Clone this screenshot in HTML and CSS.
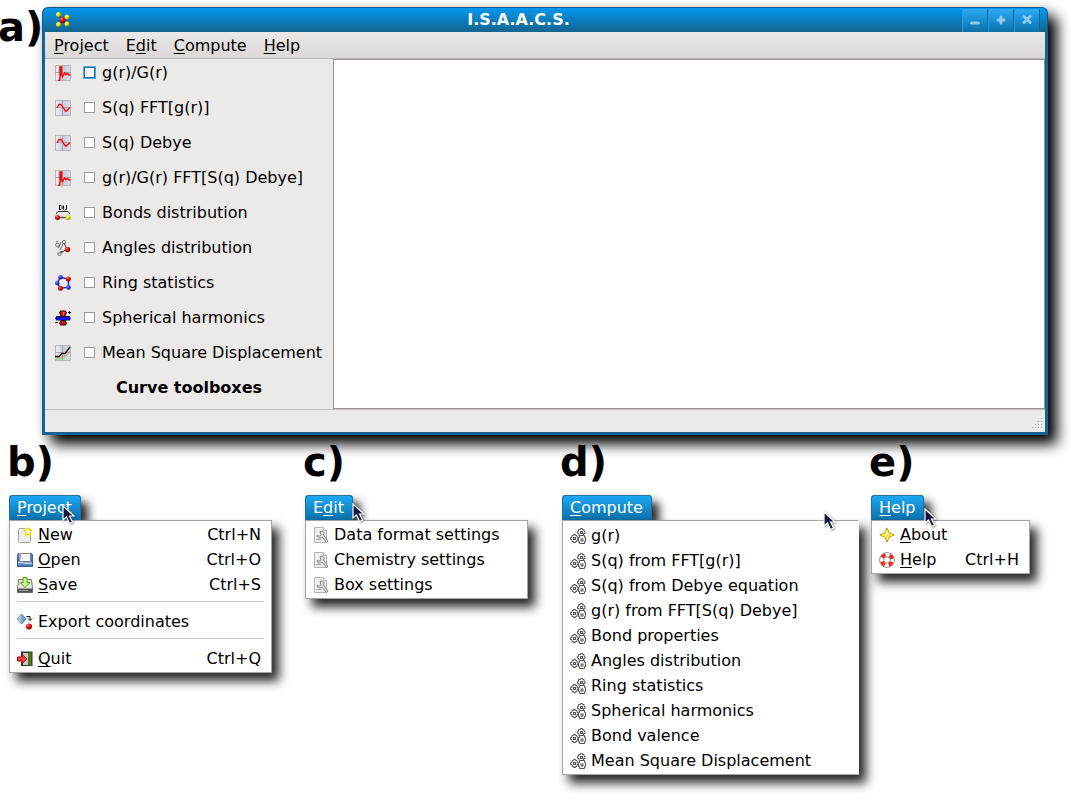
FILE: index.html
```html
<!DOCTYPE html>
<html lang="en">
<head>
<meta charset="utf-8">
<title>I.S.A.A.C.S.</title>
<link rel="stylesheet" href="styles.css">
</head>
<body>
<svg class="sprite" aria-hidden="true">
  <defs>
    <linearGradient id="tile" x1="0" y1="0" x2="1" y2="0"><stop offset="0" stop-color="#f2f2f5"/><stop offset=".5" stop-color="#c9cbd4"/><stop offset="1" stop-color="#dcdde4"/></linearGradient>
    <radialGradient id="red" cx=".35" cy=".3" r=".8"><stop offset="0" stop-color="#ff8a80"/><stop offset=".4" stop-color="#e01010"/><stop offset="1" stop-color="#6c0000"/></radialGradient>
    <radialGradient id="yellow" cx=".35" cy=".3" r=".8"><stop offset="0" stop-color="#ffff90"/><stop offset=".5" stop-color="#ece20a"/><stop offset="1" stop-color="#777000"/></radialGradient>
    <radialGradient id="blue" cx=".35" cy=".3" r=".8"><stop offset="0" stop-color="#8090ff"/><stop offset=".5" stop-color="#2038d8"/><stop offset="1" stop-color="#081068"/></radialGradient>
    <linearGradient id="tray" x1="0" y1="0" x2="0" y2="1"><stop offset="0" stop-color="#8fb0dc"/><stop offset="1" stop-color="#3465a4"/></linearGradient>
  </defs>
  <symbol id="i-plot" viewBox="0 0 16 16"><rect x=".5" y=".5" width="15" height="15" fill="url(#tile)" stroke="#b8b8be"/><path d="M7.500 0v16M0 7.500h16" stroke="#a5a7b2"/></symbol>
  <symbol id="i-gr" viewBox="0 0 16 16"><use href="#i-plot"/><path d="M3 15.500h1.500L5 12V2h1.500v8l1 1.500 2-3.500 1.500 1.500 1.500-1 1.500 1.500 1.500 0" fill="none" stroke="#fa0505" stroke-width="1.500"/></symbol>
  <symbol id="i-sq" viewBox="0 0 16 16"><use href="#i-plot"/><path d="M2 8l2-3.500h2l4.500 6.500h1L15 7.500" fill="none" stroke="#fa0505" stroke-width="1.300"/></symbol>
  <symbol id="i-bonds" viewBox="0 0 16 16"><path d="M4.500 .5v4M4 .5h2l1 1v2l-1 1H4M8.500 .5v4M11.500 0v4l-1 1h-1" fill="none" stroke="#111"/><path d="M3 6.500h10M3 6.500L1.500 8v1M13 6.500L14.500 8v1" fill="none" stroke="#333"/><path d="M4 12.500h8" stroke="#555" stroke-width="1.500"/><circle cx="2.500" cy="12.500" r="2.500" fill="url(#red)"/><circle cx="13" cy="12.500" r="2.500" fill="url(#yellow)"/></symbol>
  <symbol id="i-angles" viewBox="0 0 16 16"><g fill="#fff" stroke="#555" stroke-width=".9"><circle cx="2.500" cy="5" r="1.800"/><circle cx="9" cy="2" r="1.600"/><circle cx="4.500" cy="14" r="1.600"/><path d="M6 2L3.500 8M8 4l-3 6M1 2l2-1M5 12l3-1"/></g><path d="M9 3l3 6-6 4" fill="none" stroke="#333"/><circle cx="12.500" cy="9.500" r="2.700" fill="url(#red)"/></symbol>
  <symbol id="i-ring" viewBox="0 0 16 16"><path d="M5.500 2.500L13.500 4v8L5.500 13.500 2 8z" fill="none" stroke="#2434b0" stroke-width="1.500"/><g fill="url(#blue)"><circle cx="5.500" cy="2.300" r="2.300"/><circle cx="2.300" cy="8" r="2.300"/><circle cx="13.500" cy="12.500" r="2.300"/></g><g fill="url(#red)"><circle cx="13.300" cy="4" r="2.500"/><circle cx="5.500" cy="13.300" r="2.500"/></g></symbol>
  <symbol id="i-harm" viewBox="0 0 16 16"><path d="M5.500 .5h5l1.500 2-1.500 3.500h4l1.500 2.500-1.500 2h-4l1.500 3-1.500 2h-5L4 13.500l1.500-3h-4L0 8.500 1.500 6h4L4 2.500z" fill="#111"/><path d="M6 1.500h4l.8 1.200L9.200 6H6.800L5.200 2.700zM6.800 11h2.400l1.500 2.500-.8 1H6l-.8-1z" fill="#f00"/><path d="M8.500 2h1L8.300 6z" fill="#fff"/><rect x="1.200" y="7" width="13.600" height="3" rx="1.500" fill="#1010f0"/><path d="M13 2.500h3M14.500 1v3M0 12.500h3" stroke="#111"/></symbol>
  <symbol id="i-msd" viewBox="0 0 16 16"><use href="#i-plot"/><path d="M1 14.500l7-1 3-3 4-3" fill="none" stroke="#6de36d"/><path d="M1 13l6-1 4-2 4-4" fill="none" stroke="#f08080"/><path d="M0 11.500h4l3-3h3l5-6.500" fill="none" stroke="#111" stroke-width="1.300"/></symbol>
  <symbol id="i-mol" viewBox="0 0 16 16"><path d="M4 3l4 5-4 5M8 8l5-2M8 8l4 5" stroke="#8a3a10" stroke-width="2" fill="none"/><circle cx="7.500" cy="8" r="3" fill="url(#red)"/><g fill="url(#yellow)"><circle cx="3.500" cy="2.500" r="2.500"/><circle cx="12" cy="5" r="2.500"/><circle cx="3.500" cy="12.500" r="2.500"/><circle cx="12" cy="12" r="2.500"/></g></symbol>
  <symbol id="i-new" viewBox="0 0 16 16"><rect x="1.500" y="1.500" width="12" height="14" rx="1" fill="#eeeeec" stroke="#a3a49f"/><circle cx="11" cy="5" r="4.800" fill="#fff27a" opacity=".7"/><path d="M11 .8l1.300 2.400 2.700.3-1.800 2 .5 2.800-2.700-1-2.600 1 .5-2.800-1.900-2 2.700-.3z" fill="#fffce0" stroke="#edd400"/></symbol>
  <symbol id="i-open" viewBox="0 0 16 16"><path d="M.5 2.500L2 1v10h12V1l1.500 1.500v12H.5z" fill="url(#tray)" stroke="#204a87" stroke-width=".8"/><path d="M3.500 1.500h10v8h-11z" fill="#f6f6f6" stroke="#7d8190"/><path d="M1 10h14v4.500H1z" fill="url(#tray)"/><path d="M1 10.500h5l1 1h8" stroke="#c5d8f2" fill="none"/></symbol>
  <symbol id="i-save" viewBox="0 0 16 16"><path d="M1.500 2.500h13l1 9v4H.5v-4z" fill="#e6e6e3" stroke="#777973"/><path d="M.5 11.500h15v4H.5z" fill="#555753"/><path d="M2 13.500h9" stroke="#999"/><path d="M6 .5h4v5h3L8 10.500 3 5.500h3z" fill="#c8f59a" stroke="#4da60a"/></symbol>
  <symbol id="i-export" viewBox="0 0 16 16"><path d="M4.500 0L9 5 4.500 10 0 5z" fill="#729fcf" stroke="#345d91" stroke-width=".8"/><path d="M4.500 0v10L0 5z" fill="#a8c4e4"/><path d="M9.500 2.500H13V6M11 4.500l2 2 2-2" fill="none" stroke="#111"/><circle cx="12" cy="12.500" r="3" fill="url(#red)"/></symbol>
  <symbol id="i-quit" viewBox="0 0 16 16"><rect x="4.500" y="1" width="10.500" height="13.500" fill="#2e3436" stroke="#333"/><path d="M6 2h5v12H6z" fill="#c9cbc6"/><path d="M11 2l3.500-1v14L11 14z" fill="#4a7a1d"/><path d="M.5 6H5V3.200L9.800 8 5 12.800V10H.5z" fill="#ef4444" stroke="#a40000"/></symbol>
  <symbol id="i-prefs" viewBox="0 0 16 16"><path d="M1.500.5h9l3 3v12h-12z" fill="#eeeeec" stroke="#b4b5b1"/><path d="M10.500.5v3h3" fill="#fff" stroke="#b4b5b1"/><path d="M7 4.500c3-1.500 5 1 3.500 3.500l4.500 6-1.500 1.500L9 10c-2 2-5 1-5-1.500l2 .8L8 8 7.500 6z" fill="#e2e2df" stroke="#777973" stroke-width=".9"/><path d="M3 12.500h5" stroke="#aaa"/></symbol>
  <symbol id="i-gears" viewBox="0 0 16 16"><g fill="#fff" stroke="#555"><path d="M10.500 .5h2v1h1.500v2h1v2h-1.500v2h-4.500v-2h-1.500v-2h1v-2h2z"/><path d="M3.500 6.500h2v1h1.500v2h1v2h-1v2h-1.500v1h-2v-1h-1.500v-2h-1.500v-2h1.500v-2h1.500z"/><path d="M9.500 7.500h5v2h1v4h-1v2h-5v-2h-1v-4h1z"/></g><g fill="none" stroke="#555"><rect x="10.500" y="3.500" width="2" height="2"/><rect x="3.500" y="9.500" width="2" height="2"/><rect x="11" y="11" width="2" height="2"/></g></symbol>
  <symbol id="i-about" viewBox="0 0 16 16"><path d="M8 .8l2 5 5.200 2.200-5.200 2.200-2 5-2-5L.8 8 6 5.800z" fill="#fce94f" stroke="#c4a000" stroke-linejoin="round"/><path d="M8 3l1.200 3.500L6 8z" fill="#fffbc8"/></symbol>
  <symbol id="i-help" viewBox="0 0 16 16"><circle cx="8" cy="8" r="5.300" fill="none" stroke="#777973" stroke-width="5"/><circle cx="8" cy="8" r="5.300" fill="none" stroke="#f4f4f2" stroke-width="3.600"/><circle cx="8" cy="8" r="5.300" fill="none" stroke="#ef2929" stroke-width="3.600" stroke-dasharray="4.160 4.160" stroke-dashoffset="-2.080"/></symbol>
  <symbol id="i-cursor" viewBox="0 0 14 20"><path d="M1 1v14l3.500-3 3 6.500 3-1.500-3-6H12z" fill="#15173d" stroke="#fff" stroke-width="1.200"/></symbol>
</svg>

<main class="page">
  <figure class="figure-main">
    <figcaption class="tag">a)</figcaption>
    <section class="window">
      <header class="titlebar">
        <svg class="icon"><use href="#i-mol"/></svg>
        <h1 class="title">I.S.A.A.C.S.</h1>
        <button class="control" aria-label="Minimize"><svg class="glyph" viewBox="0 0 10 10"><path d="M1.500 8h7"/></svg></button>
        <button class="control" aria-label="Maximize"><svg class="glyph" viewBox="0 0 10 10"><path d="M5 2v6M2 5h6"/></svg></button>
        <button class="control" aria-label="Close"><svg class="glyph" viewBox="0 0 10 10"><path d="M2 1.500l6 6M8 1.500l-6 6"/></svg></button>
      </header>
      <div class="frame">
        <nav class="menubar">
          <button><u>P</u>roject</button><button>E<u>d</u>it</button><button><u>C</u>ompute</button><button><u>H</u>elp</button>
        </nav>
        <div class="workspace">
          <aside class="sidebar">
            <label class="option"><svg class="icon"><use href="#i-gr"/></svg><input class="check check-focus" type="checkbox"><span>g(r)/G(r)</span></label>
            <label class="option"><svg class="icon"><use href="#i-sq"/></svg><input class="check" type="checkbox"><span>S(q) FFT[g(r)]</span></label>
            <label class="option"><svg class="icon"><use href="#i-sq"/></svg><input class="check" type="checkbox"><span>S(q) Debye</span></label>
            <label class="option"><svg class="icon"><use href="#i-gr"/></svg><input class="check" type="checkbox"><span>g(r)/G(r) FFT[S(q) Debye]</span></label>
            <label class="option"><svg class="icon"><use href="#i-bonds"/></svg><input class="check" type="checkbox"><span>Bonds distribution</span></label>
            <label class="option"><svg class="icon"><use href="#i-angles"/></svg><input class="check" type="checkbox"><span>Angles distribution</span></label>
            <label class="option"><svg class="icon"><use href="#i-ring"/></svg><input class="check" type="checkbox"><span>Ring statistics</span></label>
            <label class="option"><svg class="icon"><use href="#i-harm"/></svg><input class="check" type="checkbox"><span>Spherical harmonics</span></label>
            <label class="option"><svg class="icon"><use href="#i-msd"/></svg><input class="check" type="checkbox"><span>Mean Square Displacement</span></label>
            <h2 class="toolboxes">Curve toolboxes</h2>
          </aside>
          <div class="canvas"></div>
        </div>
        <footer class="statusbar">
          <svg class="grip" viewBox="0 0 12 12"><path d="M9 0h1v1h-1zM6 3h1v1h-1zM9 3h1v1h-1zM3 6h1v1h-1zM6 6h1v1h-1zM9 6h1v1h-1zM0 9h1v1h-1zM3 9h1v1h-1zM6 9h1v1h-1zM9 9h1v1h-1z" fill="#aaa6a4"/><path d="M10 1h1v1h-1zM7 4h1v1h-1zM10 4h1v1h-1zM4 7h1v1h-1zM7 7h1v1h-1zM10 7h1v1h-1zM1 10h1v1h-1zM4 10h1v1h-1zM7 10h1v1h-1zM10 10h1v1h-1z" fill="#fff"/></svg>
        </footer>
      </div>
    </section>
  </figure>

  <div class="menus">
    <figure class="panel">
      <figcaption class="tag">b)</figcaption>
      <button class="tab"><u>P</u>roject</button>
      <div class="menu menu-project">
        <button class="item"><svg class="icon"><use href="#i-new"/></svg><span><u>N</u>ew</span><kbd>Ctrl+N</kbd></button>
        <button class="item"><svg class="icon"><use href="#i-open"/></svg><span><u>O</u>pen</span><kbd>Ctrl+O</kbd></button>
        <button class="item"><svg class="icon"><use href="#i-save"/></svg><span><u>S</u>ave</span><kbd>Ctrl+S</kbd></button>
        <hr class="separator">
        <button class="item"><svg class="icon"><use href="#i-export"/></svg><span>Export coordinates</span></button>
        <hr class="separator">
        <button class="item"><svg class="icon"><use href="#i-quit"/></svg><span><u>Q</u>uit</span><kbd>Ctrl+Q</kbd></button>
      </div>
      <svg class="cursor cursor-project"><use href="#i-cursor"/></svg>
    </figure>

    <figure class="panel">
      <figcaption class="tag">c)</figcaption>
      <button class="tab">E<u>d</u>it</button>
      <div class="menu menu-edit">
        <button class="item"><svg class="icon"><use href="#i-prefs"/></svg><span>Data format settings</span></button>
        <button class="item"><svg class="icon"><use href="#i-prefs"/></svg><span>Chemistry settings</span></button>
        <button class="item"><svg class="icon"><use href="#i-prefs"/></svg><span>Box settings</span></button>
      </div>
      <svg class="cursor cursor-edit"><use href="#i-cursor"/></svg>
    </figure>

    <figure class="panel">
      <figcaption class="tag">d)</figcaption>
      <button class="tab"><u>C</u>ompute</button>
      <div class="menu menu-compute">
        <button class="item"><svg class="icon"><use href="#i-gears"/></svg><span>g(r)</span></button>
        <button class="item"><svg class="icon"><use href="#i-gears"/></svg><span>S(q) from FFT[g(r)]</span></button>
        <button class="item"><svg class="icon"><use href="#i-gears"/></svg><span>S(q) from Debye equation</span></button>
        <button class="item"><svg class="icon"><use href="#i-gears"/></svg><span>g(r) from FFT[S(q) Debye]</span></button>
        <button class="item"><svg class="icon"><use href="#i-gears"/></svg><span>Bond properties</span></button>
        <button class="item"><svg class="icon"><use href="#i-gears"/></svg><span>Angles distribution</span></button>
        <button class="item"><svg class="icon"><use href="#i-gears"/></svg><span>Ring statistics</span></button>
        <button class="item"><svg class="icon"><use href="#i-gears"/></svg><span>Spherical harmonics</span></button>
        <button class="item"><svg class="icon"><use href="#i-gears"/></svg><span>Bond valence</span></button>
        <button class="item"><svg class="icon"><use href="#i-gears"/></svg><span>Mean Square Displacement</span></button>
      </div>
      <svg class="cursor cursor-compute"><use href="#i-cursor"/></svg>
    </figure>

    <figure class="panel">
      <figcaption class="tag">e)</figcaption>
      <button class="tab"><u>H</u>elp</button>
      <div class="menu menu-help">
        <button class="item"><svg class="icon"><use href="#i-about"/></svg><span><u>A</u>bout</span></button>
        <button class="item"><svg class="icon"><use href="#i-help"/></svg><span><u>H</u>elp</span><kbd>Ctrl+H</kbd></button>
      </div>
      <svg class="cursor cursor-help"><use href="#i-cursor"/></svg>
    </figure>
  </div>
</main>
</body>
</html>
```
FILE: styles.css
```css
* { box-sizing: border-box; }

body {
  margin: 0;
  background: #fff;
  color: #000;
  font: 16px/25px "DejaVu Sans", sans-serif;
}

figure, h1, h2 { margin: 0; font-size: 16px; }

button {
  margin: 0;
  padding: 0;
  border: 0;
  background: none;
  color: inherit;
  font: inherit;
  text-align: left;
}

u { text-underline-offset: 2px; text-decoration-thickness: 1px; text-decoration-skip-ink: none; }

.sprite { display: block; width: 0; height: 0; }
.icon { display: block; flex: none; width: 16px; height: 16px; }

.tag {
  margin-left: -2px;
  font-size: 40px;
  font-weight: bold;
  line-height: 40px;
  white-space: nowrap;
}

.page { padding: 7px 0 24px; }

/* Main window */
.figure-main { display: flex; padding-right: 23px; }
.figure-main .tag { flex: 0 0 44px; min-width: 0; }

.window {
  flex: 1;
  min-width: 0;
  border-radius: 6px 6px 0 0;
  box-shadow: 9px 9px 14px #000, 0 0 8px rgba(0, 0, 0, .12);
}

.titlebar {
  display: flex;
  align-items: center;
  height: 25px;
  padding: 0 7px 0 12px;
  border: 1px solid #105c87;
  border-bottom: 0;
  border-radius: 6px 6px 0 0;
  background: linear-gradient(#0198ee, #14648f);
  color: #fff;
}

.title {
  flex: 1;
  margin-left: 4px;
  line-height: 24px;
  text-align: center;
}

.control {
  display: grid;
  place-items: center;
  width: 26px;
  height: 23px;
  border-right: 1px solid #126590;
  border-left: 1px solid #1ba0f2;
  background: linear-gradient(#2cabf7, #0b70aa);
}

.glyph { width: 10px; height: 10px; fill: none; stroke: #8bcbf0; stroke-width: 3; stroke-linecap: round; }

.frame {
  border: 3px solid #15648f;
  border-top: 0;
  background: #ebeae8;
}

.menubar {
  display: flex;
  padding: 1px 1px 0;
  border-bottom: 1px solid #b9b3b3;
  background: linear-gradient(#eae9e8, #dcd8d7);
}

.menubar button { padding: 0 9px 0 8px; }

.workspace { display: flex; border-bottom: 1px solid #c3bebd; }

.sidebar {
  display: flex;
  flex: 0 0 288px;
  flex-direction: column;
  gap: 10px;
  padding: 1px 10px 9px;
}

.option { display: flex; align-items: center; white-space: nowrap; }

.check {
  flex: none;
  appearance: none;
  width: 11px;
  height: 11px;
  margin: 0 7px 0 13px;
  border: 1px solid #a39997;
  background: #fff;
}

.check-focus { border-color: #0f74b4; box-shadow: 0 0 0 1px #5fa8d4; }

.toolboxes { text-align: center; }

.canvas { flex: 1; border: 1px solid #9c9290; background: #fff; }

.statusbar { display: flex; align-items: flex-end; justify-content: flex-end; height: 22px; }
.grip { width: 12px; height: 12px; margin: 0 1px 2px 0; }

/* Opened menus */
.menus {
  display: grid;
  grid-template-columns: 296fr 257fr 309fr 200fr;
  align-items: start;
  padding: 7px 0 0 9px;
}

.panel { position: relative; }
.panel .tag { margin-bottom: 13px; }

.tab {
  display: block;
  height: 25px;
  padding: 0 9px 0 8px;
  border-radius: 4px 4px 0 0;
  background: linear-gradient(#1eaaf8, #0a6fa8);
  box-shadow: inset 0 1px #2d6f96, inset 1px 0 #1f6f9e, inset -1px 0 #1f6f9e, 7px 7px 10px rgba(0, 0, 0, .85);
  color: #fff;
}

.menu {
  position: relative;
  padding: 1px 0;
  border: 1px solid #a5a5a5;
  background: #fff;
  box-shadow: 7px 8px 10px rgba(0, 0, 0, .85);
}

.menu-project { width: 263px; }
.menu-edit { width: 223px; }
.menu-compute { width: 297px; padding-top: 2px; border-right-color: #fff; }
.menu-help { width: 159px; }

.item {
  display: flex;
  align-items: center;
  gap: 5px;
  width: 100%;
  padding: 0 10px 0 7px;
  white-space: nowrap;
}

.item kbd { margin-left: auto; font: inherit; }

.separator {
  height: 1px;
  margin: 4px 7px 7px;
  border: 0;
  background: #c6c6c6;
}

/* Pointers lying over the menus */
.cursor { position: absolute; width: 14px; height: 20px; filter: drop-shadow(1px 1px 1px rgba(0, 0, 0, .4)); }
.cursor-project { top: 63px; left: 53px; }
.cursor-edit { top: 61px; left: 47px; }
.cursor-compute { top: 69px; left: 261px; }
.cursor-help { top: 66px; left: 53px; }
```
